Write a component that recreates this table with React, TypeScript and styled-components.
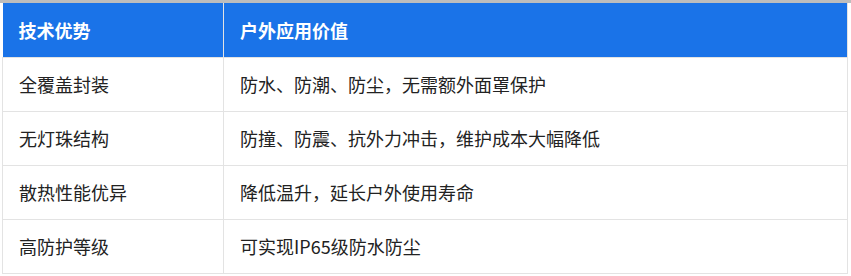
import React from 'react';
import styled, { createGlobalStyle } from 'styled-components';

const GlobalStyle = createGlobalStyle`
  html, body {
    margin: 0;
    padding: 0;
    background: #fff;
  }
  body {
    font-family: 'Noto Sans CJK SC', 'Noto Sans', sans-serif;
  }
`;

const Page = styled.div`
  width: 851px;
  height: 276px;
  border-top: 3px solid #bdbdbd;
  box-sizing: border-box;
  padding-left: 2px;
`;

const Table = styled.table`
  width: 846px;
  border-collapse: collapse;
  table-layout: fixed;
  font-size: 18px;
  color: #222;

  col.advantage {
    width: 221px;
  }
`;

const HeadCell = styled.th`
  height: 54px;
  padding: 0 16px;
  box-sizing: border-box;
  background: #1a73e8;
  color: #fff;
  font-weight: 700;
  text-align: left;
  border-left: 1px solid #e3e3e3;
  border-right: 1px solid #e3e3e3;
  border-bottom: 1px solid #e3e3e3;

  &:first-child {
    border-left: none;
  }
`;

const Cell = styled.td`
  height: 54px;
  padding: 0 16px;
  box-sizing: border-box;
  border: 1px solid #e3e3e3;
  white-space: nowrap;
`;

const rows = [
  ['全覆盖封装', '防水、防潮、防尘，无需额外面罩保护'],
  ['无灯珠结构', '防撞、防震、抗外力冲击，维护成本大幅降低'],
  ['散热性能优异', '降低温升，延长户外使用寿命'],
  ['高防护等级', '可实现IP65级防水防尘'],
];

const App = () => {
  return (
    <>
      <GlobalStyle />
      <Page>
        <Table>
          <colgroup>
            <col className='advantage' />
            <col />
          </colgroup>
          <thead>
            <tr>
              <HeadCell>技术优势</HeadCell>
              <HeadCell>户外应用价值</HeadCell>
            </tr>
          </thead>
          <tbody>
            {rows.map(([name, value]) => (
              <tr key={name}>
                <Cell>{name}</Cell>
                <Cell>{value}</Cell>
              </tr>
            ))}
          </tbody>
        </Table>
      </Page>
    </>
  );
};

export default App;
